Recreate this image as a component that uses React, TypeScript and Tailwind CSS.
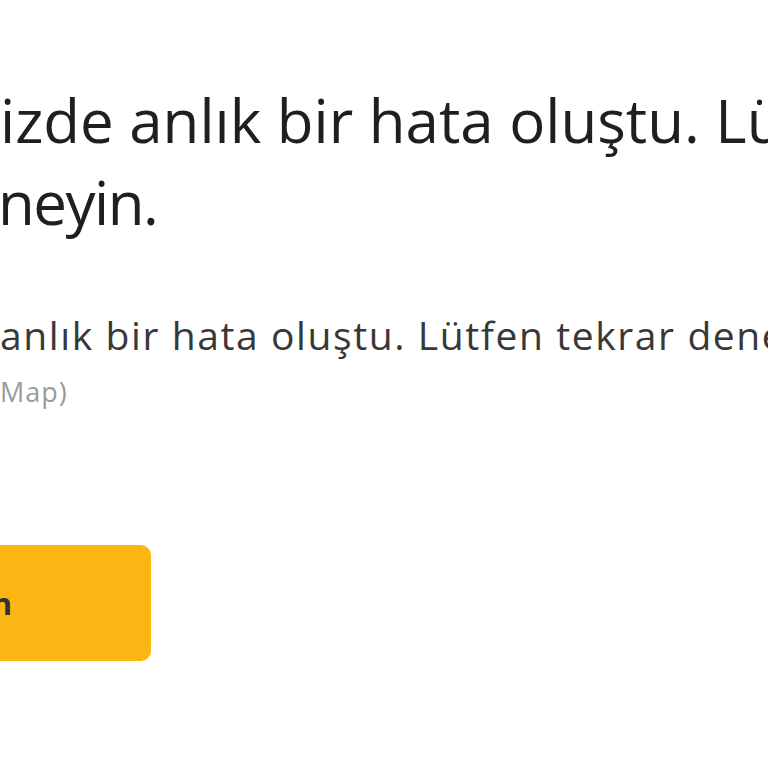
export default function App() {
  return (
    <div className="h-[768px] w-[768px] overflow-hidden bg-white font-['Open_Sans',sans-serif]">
      <div className="flex flex-col items-start pt-[79px]">
        <h1 className="whitespace-nowrap text-[60px] font-normal leading-[82px] text-[#1f1f1f]">
          <span className="flex">
            <span className="flex w-0 justify-end">Sistemlerim</span>
            <span>izde anlık bir hata oluştu. Lütfen tekrar</span>
          </span>
          <span className="flex">
            <span className="flex w-0 justify-end">de</span>
            <span className="-ml-[2px] tracking-[-1.5px]">neyin.</span>
          </span>
        </h1>
        <p className="mt-[65px] flex whitespace-nowrap text-[39px] leading-[54px] tracking-[1.6px] text-[#383838]">
          <span className="flex w-0 justify-end whitespace-pre">Sistemlerimizde </span>
          <span>anlık bir hata oluştu. Lütfen tekrar deneyin.</span>
        </p>
        <p className="mt-[10px] flex whitespace-nowrap text-[27px] leading-[40px] tracking-[1px] text-[#9a9a9a]">
          <span className="flex w-0 justify-end">(Hata Kodu: Site</span>
          <span>Map)</span>
        </p>
        <button className="-ml-[320px] mt-[133px] flex h-[116px] w-[471px] items-center justify-end rounded-[10px] bg-[#fcb614] pr-[139px] text-[31px] font-bold text-[#333]">
          Ana Sayfaya Dön
        </button>
      </div>
    </div>
  );
}
